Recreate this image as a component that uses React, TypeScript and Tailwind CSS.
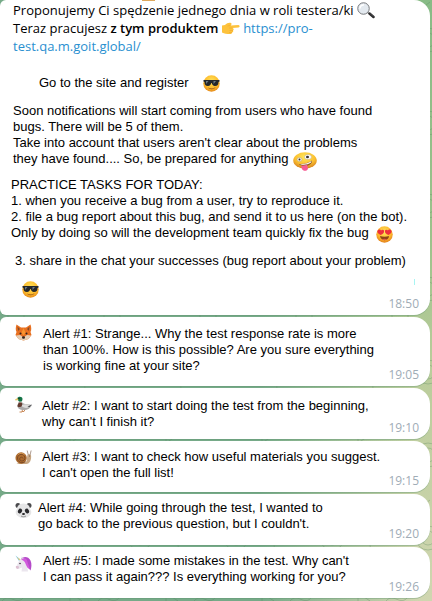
import type { ReactNode } from "react";

type IconProps = { className?: string };

function SunglassesFace({ className = "" }: IconProps) {
  return (
    <svg viewBox="0 0 34 34" className={className} role="img" aria-label="Cool face">
      <defs>
        <radialGradient id="cool" cx="50%" cy="35%" r="65%">
          <stop offset="0%" stopColor="#ffe45c" />
          <stop offset="65%" stopColor="#fdbb2c" />
          <stop offset="100%" stopColor="#e58a1c" />
        </radialGradient>
      </defs>
      <circle cx="17" cy="17" r="16.5" fill="url(#cool)" />
      <path d="M1 10h32v3l-2 1c0 5-2 8-7 8-4 0-6-3-6.500-6h-1C16 19 14 22 10 22c-5 0-7-3-7-8l-2-1z" fill="#24272b" />
      <path d="M6 12l5 0-5 6zM21 12l5 0-5 6z" fill="#6c7b85" />
      <path d="M10 25c5 3 10 3 15-1-1 5-12 6-15 1z" fill="#8a4b16" />
    </svg>
  );
}

function HeartEyesFace({ className = "" }: IconProps) {
  return (
    <svg viewBox="0 0 34 34" className={className} role="img" aria-label="Heart eyes">
      <defs>
        <radialGradient id="love" cx="50%" cy="35%" r="65%">
          <stop offset="0%" stopColor="#ffe45c" />
          <stop offset="65%" stopColor="#fdb62c" />
          <stop offset="100%" stopColor="#e2801c" />
        </radialGradient>
      </defs>
      <circle cx="17" cy="17" r="16.500" fill="url(#love)" />
      <path d="M9 18C3 15 1 11 4 8c2-2 5-1 6 1 2-2 5-2 6 0 1 4-2 7-7 9z" fill="#ec2f3c" />
      <path d="M25 18c6-3 8-7 5-10-2-2-5-1-6 1-2-2-5-2-6 0-1 4 2 7 7 9z" fill="#ec2f3c" />
      <path d="M8 20c6 2 12 2 18 0 0 11-17 11-18 0z" fill="#8e4416" />
      <path d="M12 27c3-2 7-2 10 0-3 2-7 2-10 0z" fill="#e0584a" />
    </svg>
  );
}

function ZanyFace({ className = "" }: IconProps) {
  return (
    <svg viewBox="0 0 48 38" className={className} role="img" aria-label="Zany face">
      <defs>
        <radialGradient id="zany" cx="50%" cy="30%" r="65%">
          <stop offset="0%" stopColor="#ffe95e" />
          <stop offset="65%" stopColor="#fbc030" />
          <stop offset="100%" stopColor="#db8a22" />
        </radialGradient>
      </defs>
      <ellipse cx="24" cy="17" rx="23.500" ry="16.500" fill="url(#zany)" />
      <ellipse cx="30" cy="10" rx="7" ry="5" fill="#fff" stroke="#b9a47a" />
      <ellipse cx="29" cy="10" rx="3" ry="2.500" fill="#3c3430" />
      <ellipse cx="13" cy="15" rx="5" ry="4" fill="#f7f3e6" stroke="#b9a47a" />
      <circle cx="13" cy="15" r="2" fill="#3c3430" />
      <path d="M12 24c10 1 19-2 26-7 1 7-7 11-14 11-6 0-10-1-12-4z" fill="#8d5a28" />
      <path d="M14 24c9 1 17-2 23-6l-1 3c-6 4-12 5-20 4z" fill="#fff" />
      <path d="M16 27c4 1 9 0 12-2l2 8c-1 6-10 6-12 1z" fill="#f65c93" />
    </svg>
  );
}

function Magnifier({ className = "" }: IconProps) {
  return (
    <svg viewBox="0 0 36 34" className={className} role="img" aria-label="Magnifying glass">
      <path d="M20 20l5 4" stroke="#8b8b8b" strokeWidth="3" />
      <path d="M25 23l8 7" stroke="#28282a" strokeWidth="5" strokeLinecap="round" />
      <path d="M26 23l7 6" stroke="#66666a" strokeWidth="1" />
      <circle cx="13" cy="13" r="11.500" fill="#e3e9ef" stroke="#77797d" strokeWidth="2" />
      <path d="M6 13c0-5 4-8 8-7" fill="none" stroke="#fff" strokeWidth="3" />
    </svg>
  );
}

function PointingHand({ className = "" }: IconProps) {
  return (
    <svg viewBox="0 0 36 24" className={className} role="img" aria-label="Pointing right">
      <path
        d="M0 7l6-1c4-4 8-5 12-4 2 1 1 4-1 5l16-1c3 0 3 5 0 5l-12 1c3 1 3 4 1 5 1 2 0 4-2 4 0 2-2 3-4 3-7 0-11-1-16-3z"
        fill="#fdc23c"
      />
      <path d="M11 8l6-1M21 12h-7M22 17h-7M20 21h-6" stroke="#e9a02c" strokeWidth="1" fill="none" />
    </svg>
  );
}

function Fox({ className = "" }: IconProps) {
  return (
    <svg viewBox="0 0 34 34" className={className} role="img" aria-label="Fox">
      <path d="M3 1l9 6h10l9-6c2 6 2 11 0 15l2 6-6 8-10 3-10-3-6-8 2-6C1 12 1 7 3 1z" fill="#e87020" />
      <path d="M5 5l5 5-4 4zM29 5l-5 5 4 4z" fill="#8a4a24" />
      <path d="M17 8l4 9-4 6-4-6z" fill="#f9952e" />
      <path d="M2 23l8-1 7 5 7-5 8 1-5 7-10 3-10-3z" fill="#e3cdb4" />
      <circle cx="11" cy="19" r="2" fill="#2c211d" />
      <circle cx="23" cy="19" r="2" fill="#2c211d" />
      <ellipse cx="17" cy="27" rx="3" ry="2.500" fill="#2c211d" />
    </svg>
  );
}

function Duck({ className = "" }: IconProps) {
  return (
    <svg viewBox="0 0 34 34" className={className} role="img" aria-label="Duck">
      <path d="M15 27l-1 5h-5M20 27l-2 4h-4" stroke="#c98a5a" strokeWidth="2" fill="none" />
      <path d="M8 11l6 1c1 3 5 4 9 4l11 2c-3 6-8 10-16 10C9 28 4 24 5 18z" fill="#aaa9aa" />
      <path d="M8 12l5 0c1 3 2 4 1 7-1 3-5 4-9 2 0-4 2-5 3-9z" fill="#643a2e" />
      <path d="M14 18c5-3 12-1 20-1-5 6-11 8-16 6-3-1-5-2-4-5z" fill="#dcdcdc" />
      <path d="M25 21l9-4-5 5z" fill="#34373c" />
      <path d="M4 5c2-5 11-5 11 1 0 3-2 5-2 6H8c0-3-3-3-4-7z" fill="#137346" />
      <path d="M7 12h7" stroke="#fff" strokeWidth="1.500" />
      <path d="M5 4l-5 3 1 2 6-1z" fill="#e7c66e" />
      <circle cx="8" cy="5" r="1" fill="#101010" />
    </svg>
  );
}

function Snail({ className = "" }: IconProps) {
  return (
    <svg viewBox="0 0 36 34" className={className} role="img" aria-label="Snail">
      <path d="M3 31c10-5 18 0 22-7l1-11c1-4 7-4 8 0 1 8-2 18-10 18H3z" fill="#c7a682" />
      <path d="M28 11l-2-8M32 11l2-8" stroke="#a9968a" strokeWidth="2" strokeLinecap="round" />
      <circle cx="13" cy="18" r="12" fill="#ad6b2e" />
      <path
        d="M22 26C11 32 3 23 6 15c4-8 16-5 15 4-1 7-11 7-11 1 0-4 6-5 7-1"
        fill="none"
        stroke="#7a4822"
        strokeWidth="2"
      />
      <path d="M7 11c3-4 9-4 13 0" fill="none" stroke="#d79b58" strokeWidth="2" />
      <circle cx="31" cy="14" r="1" fill="#30251d" />
    </svg>
  );
}

function Panda({ className = "" }: IconProps) {
  return (
    <svg viewBox="0 0 34 32" className={className} role="img" aria-label="Panda">
      <circle cx="6" cy="6" r="5" fill="#4a4a4d" />
      <circle cx="28" cy="6" r="5" fill="#4a4a4d" />
      <path d="M17 2c9 0 13 6 13 11 5 7 2 12-3 15-6 4-14 4-20 0-5-3-8-8-3-15C4 8 8 2 17 2z" fill="#e6e6e7" />
      <ellipse cx="10" cy="17" rx="4" ry="5" fill="#2b2b2e" transform="rotate(25 10 17)" />
      <ellipse cx="24" cy="17" rx="4" ry="5" fill="#2b2b2e" transform="rotate(-25 24 17)" />
      <ellipse cx="17" cy="23" rx="3" ry="2" fill="#242426" />
      <path d="M12 27c3 2 7 2 10 0" fill="none" stroke="#777" strokeWidth="1.500" />
    </svg>
  );
}

function Unicorn({ className = "" }: IconProps) {
  return (
    <svg viewBox="0 0 34 34" className={className} role="img" aria-label="Unicorn">
      <path d="M1 1l10 8-3 3z" fill="#7cc4e2" />
      <path d="M4 4l7 5-2 2z" fill="#f3cf6f" />
      <path d="M12 8c4-6 15-6 19 3 3 7 2 14 0 20-3-5-9-7-10-13z" fill="#b54ac9" />
      <path d="M13 3l1 7 5-3z" fill="#d8d2e0" />
      <path d="M8 12c7-6 17-2 16 7l2 14H13l1-8-7 3c-4 0-6-3-4-6z" fill="#ebe6ee" />
      <path d="M13 9c6-5 11-1 12 5 1 5 4 8 4 14-6-3-7-9-9-13-2-3-4-4-7-6z" fill="#d25add" />
      <path d="M2 22l5 0 1 4-3 2c-3-1-4-3-3-6z" fill="#dcc0d2" />
      <circle cx="10" cy="17" r="1.500" fill="#30242e" />
    </svg>
  );
}

function Lines({ lines }: { lines: string[] }) {
  return (
    <>
      {lines.map((line) => (
        <span key={line} className="block whitespace-nowrap">
          {line}
        </span>
      ))}
    </>
  );
}

function Bubble({ time, className, children }: { time: string; className: string; children: ReactNode }) {
  return (
    <article className={`grid rounded-l-[6px] rounded-r-[16px] bg-white shadow-[0_1px_0_#5f937059] ${className}`}>
      <div className="[grid-area:1/1]">{children}</div>
      <time className="self-end justify-self-end pr-[11px] pb-[2px] font-['Open_Sans',sans-serif] text-[12px] leading-[18px] text-[#a0acb6] [grid-area:1/1]">
        {time}
      </time>
    </article>
  );
}

type Alert = {
  time: string;
  lines: string[];
  icon: ReactNode;
  bubble: string;
  gap: string;
};

const alerts: Alert[] = [
  {
    time: "19:05",
    lines: [
      "Alert #1: Strange... Why the test response rate is more",
      "than 100%. How is this possible? Are you sure everything",
      "is working fine at your site?",
    ],
    icon: <Fox className="size-[17px] shrink-0" />,
    bubble: "min-h-[69px] pt-[7px]",
    gap: "gap-[11px]",
  },
  {
    time: "19:10",
    lines: ["Aletr #2: I want to start doing the test from the beginning,", "why can't I finish it?"],
    icon: <Duck className="size-[17px] shrink-0" />,
    bubble: "min-h-[51px] pt-2",
    gap: "gap-[10px]",
  },
  {
    time: "19:15",
    lines: ["Alert #3: I want to check how useful materials you suggest.", "I can't open the full list!"],
    icon: <Snail className="mt-[2px] size-[17px] shrink-0" />,
    bubble: "min-h-[51px] pt-[6px]",
    gap: "gap-[10px]",
  },
  {
    time: "19:20",
    lines: ["Alert #4: While going through the test, I wanted to", "go back to the previous question, but I couldn't."],
    icon: <Panda className="mt-1 size-[17px] shrink-0" />,
    bubble: "min-h-[51px] pt-1",
    gap: "gap-[6px]",
  },
  {
    time: "19:26",
    lines: ["Alert #5: I made some mistakes in the test. Why can't", "I can pass it again??? Is everything working for you?"],
    icon: <Unicorn className="mt-1 size-[17px] shrink-0" />,
    bubble: "min-h-[51px] rounded-bl-none pt-1",
    gap: "gap-[11px]",
  },
];

function Wallpaper() {
  return (
    <svg
      className="pointer-events-none absolute inset-0 size-full"
      fill="none"
      stroke="#4f7f58"
      strokeOpacity="0.3"
      aria-hidden="true"
    >
      <defs>
        <pattern id="doodles" width="96" height="83" patternUnits="userSpaceOnUse">
          <circle cx="44" cy="40" r="12" />
          <circle cx="44" cy="40" r="7" />
          <path d="M2 20c8-9 14 6 22-4M60 74c9-7 14 5 24-3M70 12l12 8-12 8zM8 60h16v12H8zM84 44c-6 6 4 8 0 14M30 2l8 6 8-6" />
        </pattern>
      </defs>
      <rect width="100%" height="100%" fill="url(#doodles)" stroke="none" />
    </svg>
  );
}

export default function App() {
  return (
    <main className="relative isolate min-h-screen overflow-hidden bg-[linear-gradient(to_right,#76aa88_0%,#76aa88_60%,transparent_97%),linear-gradient(to_bottom,#88bb86_0%,#9cc28b_40%,#b9cc9a_60%,#d0d6b0_100%)] font-['Liberation_Sans',Arial,sans-serif] text-[13px] leading-4 text-black">
      <Wallpaper />
      <div className="relative flex flex-col gap-[2px] pr-[2px] pb-[3px]">
        <span className="absolute top-0 left-[142px] h-px w-[13px] bg-[#dda75c]" />
        <Bubble time="18:50" className="min-h-[315px] rounded-t-none">
          <p className="pt-px pl-[13px] font-['Open_Sans',sans-serif] leading-[18px] whitespace-nowrap">
            Proponujemy Ci spędzenie jednego dnia w roli testera/ki{" "}
            <Magnifier className="inline-block h-[17px] w-[18px] align-[-4px]" />
            <br />
            Teraz pracujesz <b className="font-semibold">z tym produktem</b>{" "}
            <PointingHand className="inline-block h-[12px] w-[18px] align-[-1px]" />{" "}
            <a href="https://pro-test.qa.m.goit.global/" className="text-[#2a8fd0]">
              https://pro-
              <br />
              test.qa.m.goit.global/
            </a>
          </p>
          <p className="mt-5 flex h-4 items-center gap-[14px] pl-[39px]">
            Go to the site and register
            <SunglassesFace className="size-[17px]" />
          </p>
          <p className="mt-3 pl-[13px]">
            <Lines
              lines={[
                "Soon notifications will start coming from users who have found",
                "bugs. There will be 5 of them.",
                "Take into account that users aren't clear about the problems",
              ]}
            />
            <span className="flex h-4 gap-[5px] whitespace-nowrap">
              they have found.... So, be prepared for anything
              <ZanyFace className="mt-px h-[19px] w-6" />
            </span>
          </p>
          <div className="mt-[10px] pl-[11px]">
            <h2>PRACTICE TASKS FOR TODAY:</h2>
            <Lines
              lines={[
                "1. when you receive a bug from a user, try to reproduce it.",
                "2. file a bug report about this bug, and send it to us here (on the bot).",
              ]}
            />
            <span className="flex h-4 gap-[7px] whitespace-nowrap">
              Only by doing so will the development team quickly fix the bug
              <HeartEyesFace className="mt-px size-[17px]" />
            </span>
          </div>
          <p className="mt-3 pl-[15px] whitespace-nowrap">
            3. share in the chat your successes (bug report about your problem)
          </p>
          <SunglassesFace className="mt-3 ml-[22px] size-[17px]" />
        </Bubble>
        {alerts.map((alert) => (
          <Bubble key={alert.time} time={alert.time} className={alert.bubble}>
            <div className={`flex pl-[15px] ${alert.gap}`}>
              {alert.icon}
              <p className="pt-[2px]">
                <Lines lines={alert.lines} />
              </p>
            </div>
          </Bubble>
        ))}
        <span className="absolute top-[279px] right-[17px] h-[6px] w-px bg-[#a8f5f3]" />
      </div>
    </main>
  );
}
